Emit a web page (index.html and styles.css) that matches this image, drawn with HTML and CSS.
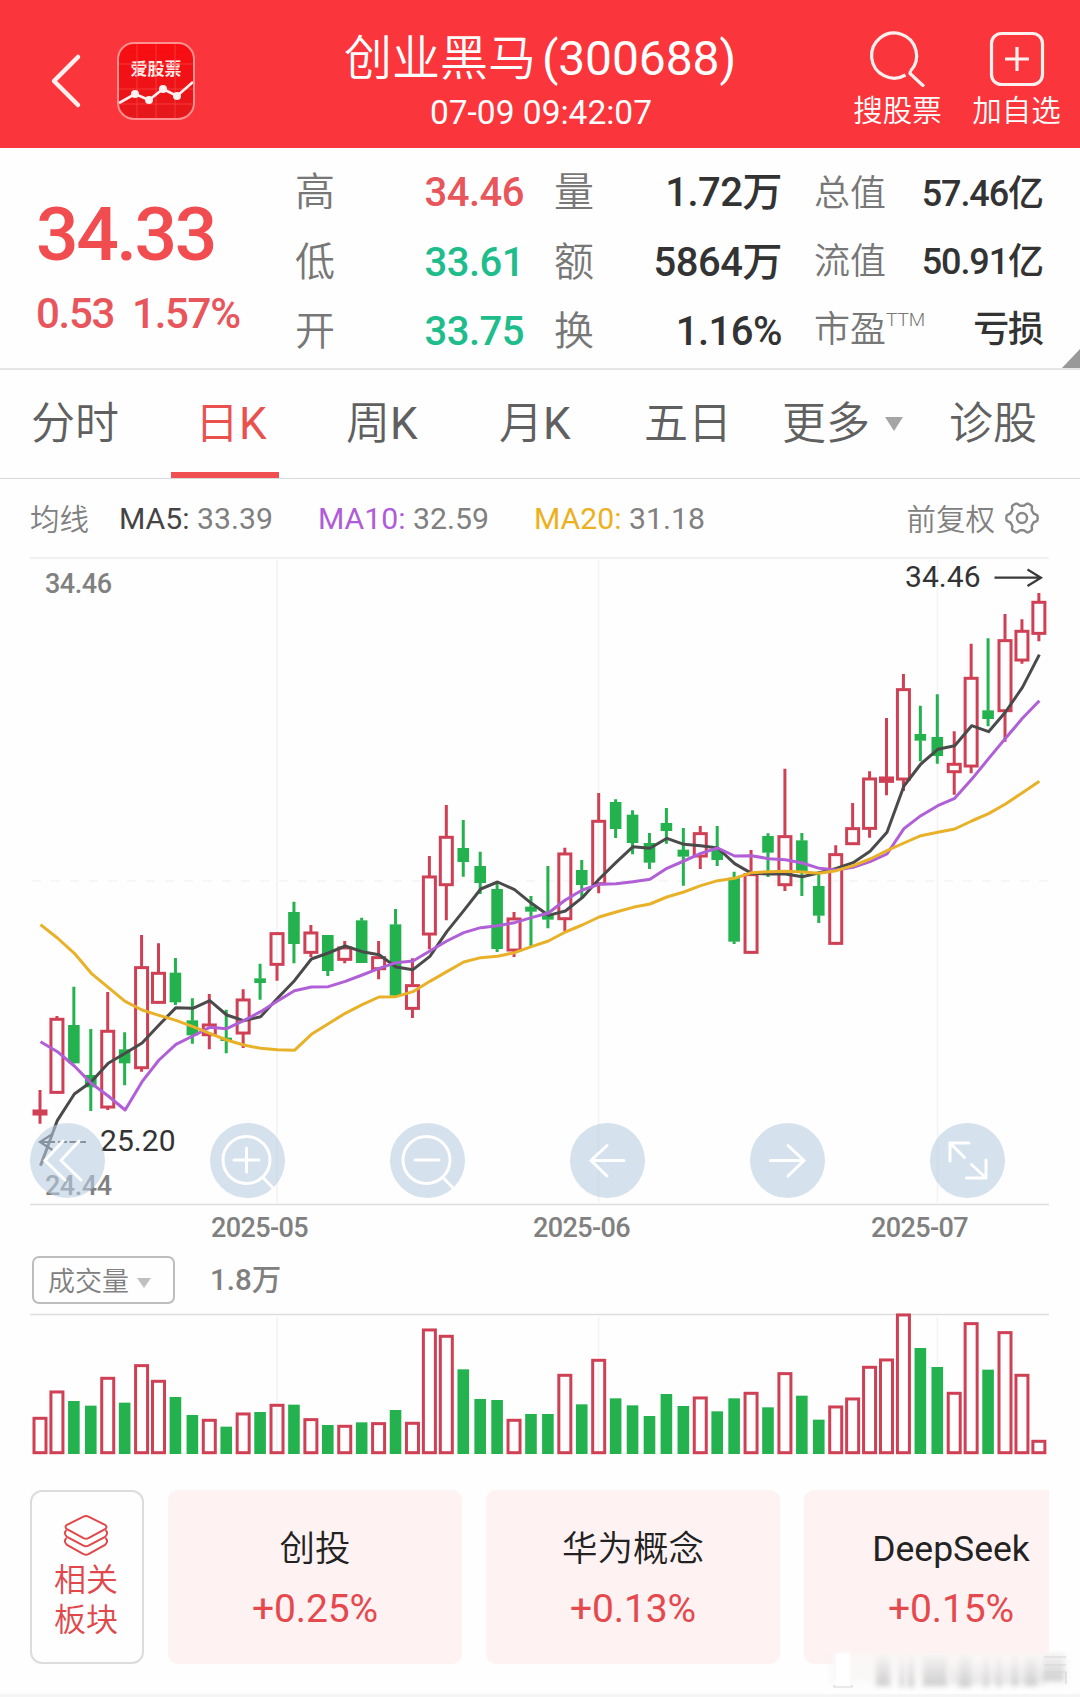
FILE: index.html
```html
<!DOCTYPE html>
<html lang="zh-CN">
<head>
<meta charset="utf-8">
<title>创业黑马 300688</title>
<link rel="stylesheet" href="styles.css">
</head>
<body>
<header class="topbar">
  <div class="topbar-left">
    <svg class="back" width="34" height="56" viewBox="0 0 34 56"><path d="M29 4 5 28 29 52"/></svg>
    <div class="logo">
      <span>爱股票</span>
      <svg width="74" height="74" viewBox="0 0 74 74">
        <path class="logo-grid" d="M18 0V74M37 0V74M56 0V74M0 20H74M0 45H74M0 60H74"/>
        <path class="logo-line" d="M0 59 16 50 30 56 44 45 58 52 74 38"/>
        <circle cx="16" cy="50" r="4"/><circle cx="30" cy="56" r="4"/><circle cx="44" cy="45" r="4"/><circle cx="58" cy="52" r="4"/>
      </svg>
    </div>
  </div>
  <div class="heading">
    <h1>创业黑马<span>(300688)</span></h1>
    <time>07-09 09:42:07</time>
  </div>
  <div class="actions">
    <div class="action">
      <svg width="60" height="60" viewBox="0 0 60 60"><path d="M37.500 48A22.500 22.500 0 1 1 42.500 44"/><path d="M42.500 44 42 46.500 56 59.500"/></svg>
      <span>搜股票</span>
    </div>
    <div class="action">
      <svg width="60" height="60" viewBox="0 0 60 60"><rect x="4.500" y="6.500" width="51" height="51" rx="10"/><path d="M18 32H42M30 20V44"/></svg>
      <span>加自选</span>
    </div>
  </div>
</header>

<section class="quote">
  <div class="price">
    <strong>34.33</strong>
    <p><span>0.53</span><span>1.57%</span></p>
  </div>
  <dl class="stats stats-a">
    <dt>高</dt><dd class="up">34.46</dd>
    <dt>低</dt><dd class="down">33.61</dd>
    <dt>开</dt><dd class="down">33.75</dd>
  </dl>
  <dl class="stats stats-b">
    <dt>量</dt><dd>1.72万</dd>
    <dt>额</dt><dd>5864万</dd>
    <dt>换</dt><dd>1.16%</dd>
  </dl>
  <dl class="stats stats-c">
    <dt>总值</dt><dd>57.46亿</dd>
    <dt>流值</dt><dd>50.91亿</dd>
    <dt>市盈<sup>TTM</sup></dt><dd>亏损</dd>
  </dl>
  <i class="corner"></i>
</section>

<nav class="tabs">
  <a>分时</a><a class="active">日<b>K</b></a><a>周<b>K</b></a><a>月<b>K</b></a><a>五日</a><a>更多<i class="caret"></i></a><a>诊股</a>
</nav>

<div class="legend">
  <span class="name">均线</span>
  <span class="ma5"><b>MA5:</b> 33.39</span>
  <span class="ma10"><b>MA10:</b> 32.59</span>
  <span class="ma20"><b>MA20:</b> 31.18</span>
  <span class="adjust"><span>前复权</span>
    <svg width="36" height="36" viewBox="-18 -18 36 36"><path id="gear"/><circle r="5"/></svg>
  </span>
</div>

<section class="chart">
  <svg id="price" width="1080" height="649" viewBox="0 557 1080 649">
    <path class="frame-top" d="M30 558H1049"/>
    <path class="grid" d="M277 560V1203M598.500 560V1203M937.500 560V1203"/>
    <path class="dash" d="M32 881H1049"/>
    <path class="frame" d="M30 1204.500H1049"/>
    <g id="candles"></g>
    <text class="mark" x="905" y="587" textLength="75.500">34.46</text>
    <path class="pointer" d="M994.500 577.700H1041M1027.500 569.500 1041 577.700 1027.500 586"/>
    <text class="mark" x="100" y="1151" textLength="75.500">25.20</text>
    <path class="pointer" d="M40 1142H55M58 1142H67M69.500 1142H77.500M80 1142H86M52.500 1134 40 1142 52.500 1150"/>
    <text class="bound" x="45" y="592.500" textLength="67">34.46</text>
    <text class="bound" x="45" y="1194.500" textLength="67">24.44</text>
  </svg>
  <div class="controls">
    <svg viewBox="0 0 75 75"><path d="M33 18 15 37.500 35 57M49 18 31 37.500 51 57"/></svg>
    <svg viewBox="0 0 75 75"><circle cx="36.500" cy="37" r="23.500"/><path d="M24 37H49M36.500 25V49M52.500 54 63 65"/></svg>
    <svg viewBox="0 0 75 75"><circle cx="36.500" cy="37" r="23.500"/><path d="M25 37H49M52.500 54 63 65"/></svg>
    <svg viewBox="0 0 75 75"><path d="M54 37.500H21M37 22.500 21 37.500 37 53"/></svg>
    <svg viewBox="0 0 75 75"><path d="M20.500 37.500H53.500M38 22.500 54 37.500 38 53"/></svg>
    <svg viewBox="0 0 75 75"><path d="M20 38V20H39M20 20 34.500 34.500M56 37V55H36.500M56 55 41.500 41.500"/></svg>
  </div>
</section>

<div class="dates"><span>2025-05</span><span>2025-06</span><span>2025-07</span></div>

<div class="volume-head">
  <button>成交量<i class="caret"></i></button>
  <span>1.8万</span>
</div>
<svg id="volume" width="1080" height="144" viewBox="0 1312 1080 144">
  <path class="frame" d="M30 1314.500H1049"/>
  <path class="grid" d="M277 1317V1454M598.500 1317V1454M937.500 1317V1454"/>
  <g id="bars"></g>
</svg>

<section class="boards">
  <div class="related">
    <svg width="46" height="44" viewBox="0 0 46 44">
      <path d="M20.500 2.600Q23 1.500 25.500 2.600L42 10.800Q45 13 42 15.200L25.500 24Q23 25.500 20.500 24L4 15.200Q1 13 4 10.800Z"/>
      <path d="M3.500 16Q0 19 4 23L20.500 31.700Q23 33 25.500 31.700L42 23Q46 19 42.500 16"/>
      <path d="M3.500 24Q0 27 4 31L20.500 40Q23 41.500 25.500 40L42 31Q46 27 42.500 24"/>
    </svg>
    <span>相关<br>板块</span>
  </div>
  <div class="cards">
    <article><h2>创投</h2><p>+0.25%</p></article>
    <article><h2>华为概念</h2><p>+0.13%</p></article>
    <article><h2 class="latin">DeepSeek</h2><p>+0.15%</p></article>
  </div>
  <svg class="haze" width="250" height="44" viewBox="0 0 250 44">
    <defs><linearGradient id="fade" x1="0" y1="0" x2="0" y2="1"><stop offset="0" stop-color="#f6f3f3"/><stop offset="1" stop-color="#cfcfcf"/></linearGradient></defs>
    <rect class="haze-base" x="6" y="3" width="234" height="30"/>
    <g class="haze-soft" fill="url(#fade)"><rect x="50" y="4" width="14" height="31"/><rect x="74" y="5" width="4" height="31"/><rect x="82" y="5" width="6" height="31"/><rect x="97" y="4" width="24" height="31"/><rect x="124" y="10" width="96" height="23" opacity=".4"/><rect x="133" y="4" width="12" height="32"/><rect x="158" y="4" width="4" height="32"/><rect x="171" y="4" width="4" height="32"/><rect x="186" y="5" width="6" height="30"/><rect x="199" y="5" width="12" height="30"/><rect x="217" y="3" width="21" height="27"/></g>
    <rect class="haze-gap" x="10" y="2" width="14" height="33"/>
    <path class="haze-lines" d="M8 34V36H26V34M218 6H240M218 14H240M218 21H240V33"/>
  </svg>
</section>
<div class="footer-band"></div>
<script src="chart.js"></script>
</body>
</html>
```
FILE: styles.css
```css
* { box-sizing: border-box; margin: 0; padding: 0; }
body {
  width: 1080px; height: 1697px; overflow: hidden; background: #fefefe; color: #333;
  font-family: Roboto, "Noto Sans CJK SC", sans-serif; position: relative;
}
svg { display: block; fill: none; }
i { font-style: normal; }

.topbar { height: 148px; background: #fa363c; color: #fff; display: grid; grid-template-columns: 340px 400px 340px; }
.topbar-left { display: flex; gap: 34px; padding: 42px 0 0 49px; }
.back { margin-top: 11px; stroke: #fff0f0; stroke-width: 4.5; stroke-linecap: round; stroke-linejoin: round; }
.logo { width: 78px; height: 78px; border: 2px solid #ff9090; border-radius: 17px; overflow: hidden; background: linear-gradient(#f90d12, #e5181b); display: grid; }
.logo > * { grid-area: 1 / 1; }
.logo span { font: bold 17px/20px "Noto Sans CJK SC", sans-serif; text-align: center; padding-top: 14px; color: #ffeaea; }
.logo-grid { stroke: #f5383b; stroke-width: 1; }
.logo-line { stroke: #fff0f0; stroke-width: 2.6; }
.logo circle { fill: #fff0f0; }
.heading { text-align: center; }
.heading h1 { font-weight: 350; font-size: 48px; line-height: 60px; padding-top: 29px; white-space: nowrap; }
.heading h1 span { font-weight: 400; margin-left: 6px; letter-spacing: -.100px; }
.heading time { display: block; font-size: 33.500px; line-height: 36px; margin-top: 6px; padding-left: 2px; }
.actions { display: flex; gap: 30px; justify-content: flex-end; padding: 27px 19px 0 0; }
.action { width: 89px; display: flex; flex-direction: column; align-items: center; }
.action svg { stroke: #fff0f0; stroke-width: 3.200; stroke-linejoin: round; }
.action span { font-size: 29.500px; line-height: 40px; font-weight: 350; margin-top: 4px; white-space: nowrap; }

.quote { height: 222px; border-bottom: 2px solid #e5e5e5; display: flex; position: relative; }
.price { width: 295px; padding-left: 36px; color: #f14c50; font-weight: 500; }
.price strong { display: block; font-size: 75px; line-height: 80px; padding-top: 46px; font-weight: 500; letter-spacing: -2.500px; }
.price p { display: flex; gap: 18px; font-size: 42px; line-height: 50px; margin-top: 15px; color: #e8555a; letter-spacing: -1.300px; }
.stats { display: grid; grid-auto-rows: 69.500px; line-height: 69.500px; padding-top: 10px; font-size: 40px; }
.stats dt { color: #777; font-weight: 350; white-space: nowrap; }
.stats dd { text-align: right; font-weight: 500; letter-spacing: -.500px; white-space: nowrap; }
.stats-a { width: 229px; grid-template-columns: 60px 1fr; }
.stats-b { width: 228px; margin-left: 30px; grid-template-columns: 50px 1fr; }
.stats-c { width: 229px; margin-left: 32px; grid-template-columns: 100px 1fr; font-size: 36px; padding-top: 12px; grid-auto-rows: 68px; line-height: 68px; }
.stats-c dd { letter-spacing: -1.100px; }
.stats sup { font-size: 19px; line-height: 0; vertical-align: 16px; }
.stats .up { color: #e8555a; }
.stats .down { color: #20bd8c; }
.corner { position: absolute; right: 0; bottom: 0; border-left: 18px solid transparent; border-bottom: 19px solid #999; }

.tabs { height: 109px; display: grid; grid-template-columns: 171px 175px 153px 145px 138px 167px 131px; border-bottom: 1px solid #d6dadc; font-size: 44px; line-height: 108px; color: #606060; font-weight: 350; }
.tabs a { white-space: nowrap; }
.tabs b { font-weight: 400; }
.tabs a:first-child { padding-left: 31px; }
.tabs .active { color: #e9514f; padding-left: 24px; background: linear-gradient(#f04e50, #f04e50) 0 100% / 108px 6px no-repeat; }
.caret { display: inline-block; border: 9px solid transparent; border-top: 14px solid #a5a5a5; border-bottom: 0; margin-left: 15px; vertical-align: 8px; }

.legend { height: 78px; display: flex; align-items: center; font-size: 30.200px; color: #808080; white-space: nowrap; padding: 0 40px 0 30px; }
.legend b { font-weight: 400; }
.legend .name { width: 89px; font-weight: 350; font-size: 29.500px; margin-top: -3px; }
.ma5 { width: 199px; } .ma10 { width: 216px; }
.ma5 b { color: #444; } .ma10 b { color: #b05bd8; } .ma20 b { color: #edb120; }
.adjust { margin-left: auto; display: flex; gap: 9px; align-items: center; font-weight: 350; font-size: 29.500px; }
.adjust span { margin-top: -3px; }
.adjust svg { stroke: #888; stroke-width: 2.400; }

.chart { position: relative; }
.frame-top { stroke: #f0f0f0; stroke-width: 2; }
.frame { stroke: #dedede; stroke-width: 1.300; }
.grid { stroke: #f2f2f2; stroke-width: 1.500; }
.dash { stroke: #f3f3f3; stroke-width: 1.500; stroke-dasharray: 9 10; }
.mark { font-size: 30px; fill: #333; }
.bound { font-size: 27px; font-weight: 500; fill: #808080; }
.pointer { stroke: #3a3a3a; stroke-width: 2.200; }
.rise { stroke: #cf4055; stroke-width: 3; }
.rise.flat { fill: #e93049; }
.fall { stroke: #24b24e; stroke-width: 3; }
rect.fall { fill: #24b24e; stroke: none; }
.line { stroke-width: 3; stroke-linejoin: round; }
.controls { position: absolute; left: 30px; top: 566px; display: flex; gap: 105px; }
.controls svg { width: 75px; height: 75px; border-radius: 50%; background: rgba(185, 205, 225, .6); stroke: #fff; stroke-width: 3; stroke-linecap: round; }

.dates { height: 44px; display: grid; grid-template-columns: 322px 338px 200px; padding-left: 211px; font-size: 27px; line-height: 45px; font-weight: 500; color: #808080; letter-spacing: -.600px; }
.volume-head { height: 62px; display: flex; padding: 6px 0 0 32px; color: #808080; }
.volume-head button { width: 143px; height: 48px; border: 2px solid #bdbdbd; border-radius: 7px; background: none; text-align: left; padding: 2px 0 0 14px; font: 350 27px/44px Roboto, "Noto Sans CJK SC", sans-serif; color: #808080; white-space: nowrap; }
.volume-head .caret { border-width: 10px 7px 0; margin-left: 8px; vertical-align: 3px; border-top-color: #c0c0c0; }
.volume-head span { font-size: 29.500px; line-height: 48px; font-weight: 500; margin-left: 35px; }

.boards { display: flex; gap: 24px; padding: 34px 31px 0 30px; position: relative; height: 238px; }
.related { width: 114px; height: 174px; border: 2px solid #dcdcdc; border-radius: 12px; color: #e0484b; font-size: 32px; line-height: 39.500px; font-weight: 350; display: flex; flex-direction: column; align-items: center; padding: 22px 2px 0 0; gap: 3px; }
.related svg { stroke: #e0484b; stroke-width: 2; }
.cards { width: 881px; overflow: hidden; display: flex; gap: 24px; }
.cards article { flex: 0 0 294px; height: 174px; border-radius: 10px; background: #fef2f3; text-align: center; }
.cards h2 { font-size: 35.500px; line-height: 50px; padding-top: 34px; font-weight: 350; color: #222; }
.cards .latin { font-weight: 400; }
.cards p { font-size: 39px; line-height: 50px; margin-top: 10px; color: #e5494d; letter-spacing: -.100px; }
.haze { position: absolute; left: 826px; top: 195px; }
.haze-base { fill: #faf7f7; filter: blur(4px); }
.haze-soft { filter: blur(2.500px); }
.haze-gap { fill: #fff; filter: blur(.8px); }
.haze-lines { stroke: #d5d5d5; stroke-width: 1.200; filter: blur(.6px); }
.footer-band { height: 3px; background: #f5f5f5; }
```
FILE: chart.js
```js
// One entry per trading day: direction, then pixel rows of high, body top, body bottom, low (in thirds of a pixel).
const groups = [
  [780, 'r930,989,1006,1031 r708,714,941,941 g620,735,850,850 g747,885,922,993 r636,750,985,990 g757,808,850,916 r465,559,867,875 r490,576,671,671 g534,578,667,675 g655,721,766,791 r642,731,768,808 g689,773,783,820 r628,656,763,804 g551,595,609,659 r457,457,557,602 g365,396,492,550 r435,455,521,531 g465,465,573,588 r483,500,542,550'],
  [760, 'g473,481,609,609 r543,589,630,658 g447,493,707,712 r595,673,749,774 r288,347,526,568 r135,228,378,481 g180,264,306,350 g275,318,369,402 g363,387,567,576 r456,473,574,591 g408,440,455,558 g318,464,479,505 r263,278,480,514 g300,330,375,415 r99,180,375,400 g118,126,207,234 g151,164,249,283 g219,249,308,327 g144,189,213,251 g204,269,290,377'],
  [560, 'r798,817,892,927 g798,868,900,918 g935,953,1145,1152 r870,940,1181,1181 g820,828,878,951 r626,826,978,993 g819,841,937,1008 g937,978,1067,1089 r856,880,1154,1154 r729,802,855,855 r634,653,809,833 r474,650,668,706 r342,385,661,693 g437,522,542,604 g403,531,588,611 r514,609,639,704 r251,351,622,640 g235,451,477,499 r162,238,456,545 r178,210,304,311 r99,123,224,244']
];
const averages = {
  '#4a4a4a': ['1157,1021,942,905,850,820,789,735,683,685,662,705,722,710,655,602,537,519,498', '575,584,621,629,589,515,452,387,366,389,430,466,453,413,357,307,260,265,235,253', '857,864,911,940,942,942,950,938,925,908,874,817,678,612,568,557,497,515,456,382,284'],
  '#b05fd6': ['785,815,858,910,948,990,905,840,793,768,742,746,722,695,663,632,621,620,604', '645,625,608,603,573,543,518,503,497,488,473,459,420,390,373,371,365,358,325,303', '880,864,888,887,896,899,909,925,930,922,905,882,806,767,737,715,658,596,535,475,422'],
  '#e8b128': ['434,474,520,580,622,664,690,706,721,740,760,780,795,805,809,811,763,731,700', '734,711,710,695,664,635,606,593,589,578,560,543,516,495,471,456,442,432,411,396', '977,962,955,938,935,934,936,940,932,917,897,872,849,827,817,807,783,761,732,698,664']
};
const volumes = [951,872,903,917,831,908,793,840,891,945,957,980,938,936,912,914,955,975,975,967,967,930,966,686,705,808,897,900,957,942,942,822,913,777,895,916,948,882,918,890,934,895,876,922,817,887,959,917,893,798,776,641,744,801,876,667,809,694,822,1020];
const STEP = 16.93, FIRST = 40;
const bar = (x, top, bottom, rise, extra) => rise
  ? `<rect class="rise${extra}" x="${x - 6}" y="${top + 1.3}" width="12" height="${Math.max(bottom - top - 2.6, 1)}"/>`
  : `<rect class="fall" x="${x - 5.8}" y="${top}" width="11.6" height="${bottom - top}"/>`;

let candles = '', bars = '', i = 0;
for (const [base, list] of groups) {
  for (const item of list.split(' ')) {
    const rise = item[0] === 'r';
    const [high, top, bottom, low] = item.slice(1).split(',').map(v => base + v / 3);
    const x = FIRST + STEP * i;
    const flat = bottom - top < 7 ? ' flat' : '';
    candles += `<path class="${rise ? 'rise' : 'fall'}" d="M${x} ${high}V${top + .5}M${x} ${bottom - .5}V${low}"/>` + bar(x, top, bottom, rise, flat);
    bars += bar(x, 1100 + volumes[i] / 3, 1454, rise, '');
    i++;
  }
}
for (const [color, parts] of Object.entries(averages)) {
  const ys = parts.flatMap((p, k) => p.split(',').map(v => groups[k][0] + v / 3));
  candles += `<polyline class="line" stroke="${color}" points="${ys.map((y, n) => `${FIRST + .5 + STEP * n},${y}`).join(' ')}"/>`;
}
document.getElementById('candles').innerHTML = candles;
document.getElementById('bars').innerHTML = bars;

// Six-lobed outline of the settings icon.
let gear = '';
for (let a = 0; a < 360; a += 5) {
  const t = a * Math.PI / 180, r = 14 + 1.7 * Math.tanh(2.5 * Math.cos(6 * t));
  gear += `${a ? 'L' : 'M'}${(r * Math.cos(t)).toFixed(2)} ${(r * Math.sin(t)).toFixed(2)}`;
}
document.getElementById('gear').setAttribute('d', gear + 'Z');
```
